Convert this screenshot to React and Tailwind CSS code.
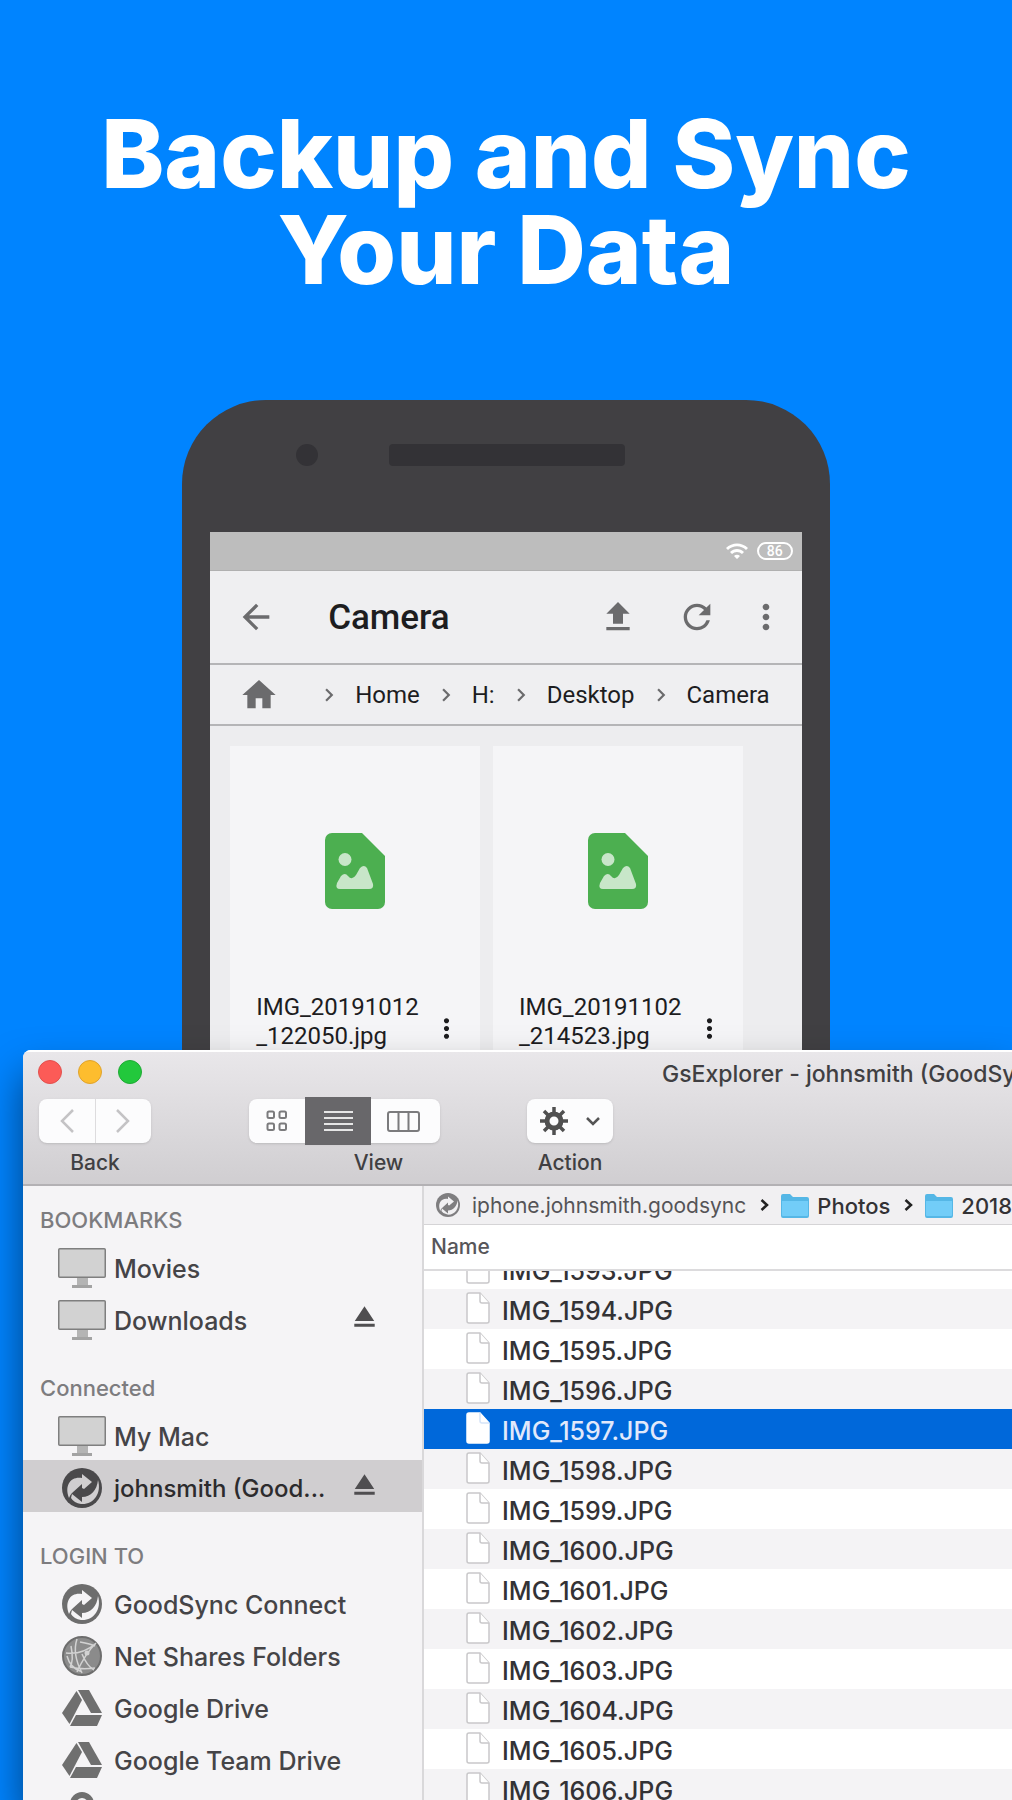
import React from 'react';
import {
  MdArrowBack,
  MdFileUpload,
  MdRefresh,
  MdMoreVert,
  MdHome,
  MdChevronRight,
  MdWifi,
  MdEject,
} from 'react-icons/md';

const crumbs = ['Home', 'H:', 'Desktop', 'Camera'];

const photos = [
  ['IMG_20191012', '_122050.jpg'],
  ['IMG_20191102', '_214523.jpg'],
];

const files = [
  'IMG_1594.JPG',
  'IMG_1595.JPG',
  'IMG_1596.JPG',
  'IMG_1597.JPG',
  'IMG_1598.JPG',
  'IMG_1599.JPG',
  'IMG_1600.JPG',
  'IMG_1601.JPG',
  'IMG_1602.JPG',
  'IMG_1603.JPG',
  'IMG_1604.JPG',
  'IMG_1605.JPG',
  'IMG_1606.JPG',
];

const selectedFile = 'IMG_1597.JPG';

const ImageFileIcon = () => (
  <svg width="60" height="76" viewBox="0 0 60 76" aria-hidden="true">
    <path d="M7 0H37L60 23V69a7 7 0 0 1-7 7H7a7 7 0 0 1-7-7V7a7 7 0 0 1 7-7Z" fill="#4caf50" />
    <circle cx="20" cy="26.500" r="6.500" fill="#c8e6c9" />
    <path
      d="M12 50L16 43q4-4 7 0q4 5 8-1L35 35q4-4 7 0L48 51q1 5-4 5H15q-5 0-3-6Z"
      fill="#c8e6c9"
    />
  </svg>
);

const MonitorIcon = () => (
  <svg width="48" height="40" viewBox="0 0 48 40" aria-hidden="true">
    <rect x="19" y="29" width="11" height="8" fill="#b4b4b4" />
    <rect x="14" y="37" width="20" height="3" fill="#a3a3a3" />
    <rect x="0.75" y="0.75" width="46.500" height="28.500" rx="1" fill="#d2d2d2" stroke="#7f7f7f" strokeWidth="1.500" />
  </svg>
);

const SyncIcon = ({ size = 40, color = '#6d6d6d', bg = '#f5f4f6' }) => (
  <svg width={size} height={size} viewBox="0 0 40 40" aria-hidden="true">
    <circle cx="20" cy="20" r="20" fill={color} />
    <path d="M7 30C2 17 9 8 20 10V6L30 14L22 21L20 20V16L10 25Q8 27 7 30Z" fill={bg} />
    <path d="M36 12C40 26 31 37 19 36Q12 35 9 30L10 26L20 34V29C29 29 35 22 36 12Z" fill={bg} />
  </svg>
);

const NetIcon = () => (
  <svg width="40" height="40" viewBox="0 0 40 40" fill="none" aria-hidden="true">
    <circle cx="20" cy="20" r="19" fill="#8b8b8b" stroke="#6d6d6d" strokeWidth="2" />
    <g stroke="#d2d2d2" strokeWidth="1.500">
      <path d="M4 17Q20 19 33 8M9 10Q12 25 8 31M15 3Q10 18 20 37M34 7Q23 18 15 36M20 18Q25 30 32 34M8 31Q20 34 33 32M18 6Q29 8 33 10M5 20Q8 32 20 36" />
    </g>
    <circle cx="25" cy="17" r="2.500" fill="#d2d2d2" />
  </svg>
);

const DriveIcon = () => (
  <svg width="40" height="36" viewBox="0 0 40 36" fill="#6f6f6f" aria-hidden="true">
    <path d="M14.500 1L20 10L7.500 34L0 23Z" />
    <path d="M16 0H27L40 23H29Z" />
    <path d="M14 25H40L35 36H8Z" />
  </svg>
);

const PersonIcon = () => (
  <svg width="40" height="40" viewBox="0 0 40 40" fill="none" stroke="#6f6f6f" aria-hidden="true">
    <path d="M11 12a9 9 0 0 1 18 0q0 6-9 10" strokeWidth="6" />
  </svg>
);

const PageIcon = ({ active }) => (
  <svg width="24" height="32" viewBox="0 0 24 32" fill="#fff" stroke={active ? '#fff' : '#c9c8ca'} strokeWidth="1.500" aria-hidden="true">
    <path d="M3 1H14L23 11V29a2 2 0 0 1-2 2H3a2 2 0 0 1-2-2V3a2 2 0 0 1 2-2Z" />
    <path d="M14 1V9a2 2 0 0 0 2 2H23" stroke={active ? '#d5e3f7' : '#c9c8ca'} />
  </svg>
);

const FolderIcon = () => (
  <svg width="28" height="25" viewBox="0 0 28 25" aria-hidden="true">
    <path d="M0 3Q0 1 2 1H9L12 4H26Q28 4 28 6V23Q28 25 26 25H2Q0 25 0 23Z" fill="#55b7e6" />
    <path d="M1 8H27V22Q27 23 26 23H2Q1 23 1 22Z" fill="#72cdf8" />
  </svg>
);

const Caret = () => (
  <svg width="9" height="12" viewBox="0 0 9 12" fill="none" stroke="#222" strokeWidth="2.500" aria-hidden="true">
    <path d="M1.500 1L7 6L1.500 11" />
  </svg>
);

const GearIcon = () => (
  <svg width="28" height="28" viewBox="-14 -14 28 28" fill="none" stroke="#505050" aria-hidden="true">
    <circle r="7" strokeWidth="5" />
    <path d="M0-14V-8M0 14V8M-14 0H-8M14 0H8M-10-10L-6-6M10 10L6 6M-10 10L-6 6M10-10L6-6" strokeWidth="3.500" />
  </svg>
);

const bookmarks = [
  { label: 'Movies', icon: <MonitorIcon /> },
  { label: 'Downloads', icon: <MonitorIcon />, eject: true },
];

const connected = [
  { label: 'My Mac', icon: <MonitorIcon /> },
  { label: 'johnsmith (Good...', icon: <SyncIcon color="#4a494b" bg="#d0ced0" />, eject: true, active: true },
];

const logins = [
  { label: 'GoodSync Connect', icon: <SyncIcon /> },
  { label: 'Net Shares Folders', icon: <NetIcon /> },
  { label: 'Google Drive', icon: <DriveIcon /> },
  { label: 'Google Team Drive', icon: <DriveIcon /> },
  { label: '', icon: <PersonIcon /> },
];

const SidebarGroup = ({ title, items, className }) => (
  <section>
    <h2 className={`flex items-end pb-[6px] pl-[17px] text-[22px] leading-7 font-medium text-[#7d7c7f] ${className}`}>
      {title}
    </h2>
    <ul>
      {items.map((item, i) => (
        <li
          key={i}
          className={`flex h-[52px] items-center pr-10 pl-[35px] ${item.active ? 'bg-[#d0ced0] text-2xl text-[#2c2b2d]' : 'text-[25px] text-[#454447]'}`}
        >
          <a href="#" className="flex flex-1 items-center gap-2 pt-1 leading-8 font-medium whitespace-nowrap">
            <span className="flex w-12 shrink-0 justify-center">{item.icon}</span>
            <span className="pt-0.5">{item.label}</span>
          </a>
          {item.eject && (
            <button aria-label="Eject" className="shrink-0 pb-1 text-[#4f4e50]">
              <MdEject size={35} />
            </button>
          )}
        </li>
      ))}
    </ul>
  </section>
);

const Phone = () => (
  <div className="mx-auto flex min-h-0 w-[64%] flex-col rounded-t-[84px] bg-[#414043] px-7">
    <div className="flex h-[132px] items-start pt-11 pl-[86px]">
      <span className="h-[22px] w-[22px] rounded-full bg-[#333236]" />
      <span className="ml-[71px] h-[22px] w-[236px] rounded bg-[#333236]" />
    </div>

    <div className="flex h-[518px] flex-col overflow-hidden bg-[#ededef] font-[Roboto,sans-serif] text-[#1d1d1f]">
      <div className="flex h-[39px] shrink-0 items-center justify-end gap-2 border-b border-[#b0b0b0] bg-[#bdbdbd] pr-[9px] text-white">
        <MdWifi size={24} />
        <span className="flex h-[18px] w-9 items-center justify-center rounded-full border-2 border-white text-sm leading-none font-medium">
          86
        </span>
      </div>

      <div className="flex h-[94px] shrink-0 items-center border-b-2 border-[#b5b5b7] bg-[#efeff1] pr-4 pl-[26px] text-[#6b6b6d]">
        <button aria-label="Back">
          <MdArrowBack size={40} />
        </button>
        <h2 className="ml-[52px] flex-1 pt-0.5 text-[35px] leading-10 font-medium text-[#1d1d1f]">Camera</h2>
        <button aria-label="Upload">
          <MdFileUpload size={40} />
        </button>
        <button aria-label="Refresh" className="ml-[39px]">
          <MdRefresh size={40} />
        </button>
        <button aria-label="More" className="ml-[29px]">
          <MdMoreVert size={40} />
        </button>
      </div>

      <nav className="flex h-[61px] shrink-0 items-center gap-[13px] border-b-2 border-[#b5b5b7] bg-[#efeff1] pl-[29px] text-2xl whitespace-nowrap">
        <a href="#" aria-label="Root" className="mr-6 text-[#6b6b6d]">
          <MdHome size={40} />
        </a>
        {crumbs.map((crumb) => (
          <React.Fragment key={crumb}>
            <MdChevronRight size={26} className="shrink-0 text-[#6b6b6d]" />
            <a href="#">{crumb}</a>
          </React.Fragment>
        ))}
      </nav>

      <div className="flex flex-1 gap-[13px] pt-5 pr-[59px] pl-5">
        {photos.map(([first, second]) => (
          <figure key={first} className="flex flex-1 flex-col bg-[#f5f5f7]">
            <div className="flex h-[247px] shrink-0 items-center justify-center pt-0.5">
              <ImageFileIcon />
            </div>
            <figcaption className="flex items-center justify-between pr-[18px] pl-[26px] text-2xl leading-[29px]">
              <span>
                {first}
                <br />
                {second}
              </span>
              <button aria-label="File options" className="pt-3">
                <MdMoreVert size={31} />
              </button>
            </figcaption>
          </figure>
        ))}
      </div>
    </div>
  </div>
);

const Toolbar = () => (
  <header className="h-[136px] shrink-0 border-t-2 border-b-2 border-t-white border-b-[#b3b1b4] bg-gradient-to-b from-[#e9e7ea] to-[#d0ced1] text-[#403f42]">
    <div className="flex h-[47px] items-start gap-4 pt-2 pl-[15px]">
      <button aria-label="Close" className="h-6 w-6 shrink-0 rounded-full border border-[#e2504d] bg-[#fc5b57]" />
      <button aria-label="Minimize" className="h-6 w-6 shrink-0 rounded-full border border-[#e0a32c] bg-[#fdbd2e]" />
      <button aria-label="Zoom" className="h-6 w-6 shrink-0 rounded-full border border-[#1faa35] bg-[#22c83c]" />
      <h2 className="ml-[504px] text-[23px] leading-7 font-medium whitespace-nowrap">GsExplorer - johnsmith (GoodSync)</h2>
    </div>

    <div className="flex pl-4 text-[21px] leading-7 font-medium">
      <div className="flex w-[112px] flex-col items-center gap-1.5">
        <div className="flex h-11 w-full divide-x divide-[#dddcde] rounded-lg bg-[#fcfcfd] text-[#c4c3c5] shadow">
          <button aria-label="Previous folder" className="flex flex-1 items-center justify-center">
            <svg width="14" height="24" viewBox="0 0 14 24" fill="none" stroke="currentColor" strokeWidth="2.500">
              <path d="M13 1L2 12L13 23" />
            </svg>
          </button>
          <button aria-label="Next folder" className="flex flex-1 items-center justify-center">
            <svg width="14" height="24" viewBox="0 0 14 24" fill="none" stroke="currentColor" strokeWidth="2.500">
              <path d="M1 1L12 12L1 23" />
            </svg>
          </button>
        </div>
        <span>Back</span>
      </div>

      <div className="ml-[98px] flex w-[191px] flex-col items-center gap-1.5">
        <div className="flex h-11 w-full items-center rounded-lg bg-[#fcfcfd] text-[#7b7b7d] shadow">
          <button aria-label="Icon view" className="flex flex-1 justify-center">
            <svg width="22" height="22" viewBox="0 0 22 22" fill="none" stroke="currentColor" strokeWidth="2">
              <rect x="1.500" y="1.500" width="6.500" height="6.500" rx="1.500" />
              <rect x="13.500" y="1.500" width="6.500" height="6.500" rx="1.500" />
              <rect x="1.500" y="13.500" width="6.500" height="6.500" rx="1.500" />
              <rect x="13.500" y="13.500" width="6.500" height="6.500" rx="1.500" />
            </svg>
          </button>
          <button aria-label="List view" className="flex h-12 w-[66px] items-center justify-center bg-[#68676a]">
            <svg width="29" height="22" viewBox="0 0 29 22" stroke="#e6e6e6" strokeWidth="2">
              <path d="M0 2H29M0 8H29M0 14H29M0 20H29" />
            </svg>
          </button>
          <button aria-label="Column view" className="flex w-[69px] justify-center pr-1">
            <svg width="33" height="21" viewBox="0 0 33 21" fill="none" stroke="currentColor" strokeWidth="2">
              <rect x="1" y="1" width="31" height="19" rx="2" />
              <path d="M11.500 1V20M21.500 1V20" />
            </svg>
          </button>
        </div>
        <span className="pl-[68px]">View</span>
      </div>

      <div className="ml-[87px] flex w-[86px] flex-col items-center gap-1.5">
        <button aria-label="Action menu" className="flex h-11 w-full items-center justify-center gap-[18px] rounded-lg bg-[#fcfcfd] shadow">
          <GearIcon />
          <svg width="14" height="9" viewBox="0 0 14 9" fill="none" stroke="#555" strokeWidth="2.500">
            <path d="M1 1L7 7L13 1" />
          </svg>
        </button>
        <span>Action</span>
      </div>
    </div>
  </header>
);

const ExplorerWindow = () => (
  <div className="relative ml-[23px] flex min-h-0 flex-1 flex-col overflow-hidden rounded-tl-lg bg-white font-[Inter,sans-serif] shadow-[0_24px_40px_rgba(0,0,0,0.5)]">
    <Toolbar />

    <div className="flex min-h-0 flex-1">
      <aside className="w-[401px] shrink-0 overflow-hidden border-r-2 border-[#d9d8da] bg-[#f5f4f6]">
        <SidebarGroup title="BOOKMARKS" items={bookmarks} className="h-[54px]" />
        <SidebarGroup title="Connected" items={connected} className="h-16" />
        <SidebarGroup title="LOGIN TO" items={logins} className="h-16" />
      </aside>

      <main className="min-w-0 flex-1 overflow-hidden">
        <nav className="flex h-[39px] items-center border-b border-[#d5d4d6] bg-[#f1f0f2] pl-3 text-[22px] whitespace-nowrap text-[#555457]">
          <a href="#" className="flex items-center gap-3 text-[21px]">
            <SyncIcon size={24} color="#7f7e80" bg="#f1f0f2" />
            <span className="pt-0.5">iphone.johnsmith.goodsync</span>
          </a>
          <span className="mr-3 ml-[14px]">
            <Caret />
          </span>
          <a href="#" className="flex items-center gap-2 font-medium text-[#333235]">
            <FolderIcon />
            <span className="pt-0.5">Photos</span>
          </a>
          <span className="mr-3 ml-[14px]">
            <Caret />
          </span>
          <a href="#" className="flex items-center gap-2 font-medium text-[#333235]">
            <FolderIcon />
            <span className="pt-0.5">2018</span>
          </a>
        </nav>

        <table className="w-full border-collapse text-left">
          <thead>
            <tr className="h-[45px] border-b-2 border-[#dcdbdd]">
              <th className="pl-[7px] text-[21px] leading-7 font-medium text-[#57565a]">Name</th>
            </tr>
          </thead>
          <tbody className="text-[25px] leading-8 font-medium text-[#333235]">
            <tr>
              <td className="p-0">
                <div className="flex h-[18px] items-end overflow-hidden">
                  <div className="flex h-10 shrink-0 items-center gap-3 pl-[42px]">
                    <span className="pb-0.5">
                      <PageIcon />
                    </span>
                    <span className="pt-1">IMG_1593.JPG</span>
                  </div>
                </div>
              </td>
            </tr>
            {files.map((file) => (
              <tr key={file} className={file === selectedFile ? 'bg-[#0068da] text-[#e1e9fb]' : 'odd:bg-white even:bg-[#f4f3f5]'}>
                <td className="p-0">
                  <div className="flex h-10 items-center gap-3 pl-[42px]">
                    <span className="pb-0.5">
                      <PageIcon active={file === selectedFile} />
                    </span>
                    <span className="pt-1">{file}</span>
                  </div>
                </td>
              </tr>
            ))}
          </tbody>
        </table>
      </main>
    </div>
  </div>
);

const App = () => {
  return (
    <div className="flex h-screen flex-col overflow-hidden bg-[#0084ff]">
      <h1 className="h-[400px] shrink-0 pt-[106px] text-center font-[Inter,sans-serif] text-[95px] leading-[96px] font-extrabold text-white">
        Backup and Sync
        <br />
        Your Data
      </h1>
      <Phone />
      <ExplorerWindow />
    </div>
  );
};

export default App;
